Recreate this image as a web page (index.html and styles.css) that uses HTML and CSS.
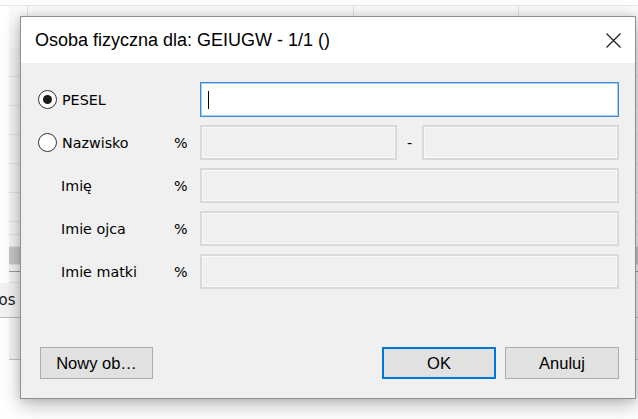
FILE: index.html
```html
<!DOCTYPE html>
<html lang="pl">
<head>
<meta charset="utf-8">
<title>Osoba fizyczna</title>
<link rel="stylesheet" href="styles.css">
</head>
<body>
  <!-- spreadsheet-like application window in the background -->
  <div class="sheet">
    <div class="sheet-head">
      <div class="head-cell head-a"></div>
      <div class="head-cell head-b"></div>
      <div class="head-cell head-c"></div>
      <div class="head-cell head-d"></div>
    </div>
    <div class="sheet-row r29"></div>
    <div class="sheet-row r29"></div>
    <div class="sheet-row r29"></div>
    <div class="sheet-row r29"></div>
    <div class="sheet-row r29"></div>
    <div class="sheet-row r29"></div>
    <div class="sheet-row r13"></div>
    <div class="sheet-row r12"></div>
    <div class="sheet-row r18 sel"></div>
    <div class="sheet-row r7"></div>
    <div class="sheet-row r11"></div>
    <div class="sheet-row r35"><span class="cell-text">Pos</span></div>
    <div class="sheet-row r42"></div>
  </div>

  <!-- modal dialog -->
  <div class="dialog">
    <div class="titlebar">
      <span class="title">Osoba fizyczna dla: GEIUGW - 1/1 ()</span>
      <span class="close">
        <svg width="15" height="15" viewBox="0 0 15 15"><path d="M0.5 0.5 L14.5 14.5 M14.5 0.5 L0.5 14.5" stroke="#1b1b1b" stroke-width="1.2" fill="none"/></svg>
      </span>
    </div>
    <div class="content">
      <div class="form">
        <label class="opt"><span class="radio checked"></span>PESEL</label>
        <span class="pct"></span>
        <div class="field active"><span class="caret"></span></div>

        <label class="opt"><span class="radio"></span>Nazwisko</label>
        <span class="pct">%</span>
        <div class="pair">
          <div class="field"></div>
          <span class="dash">-</span>
          <div class="field"></div>
        </div>

        <span class="lbl">Imię</span>
        <span class="pct">%</span>
        <div class="field"></div>

        <span class="lbl">Imie ojca</span>
        <span class="pct">%</span>
        <div class="field"></div>

        <span class="lbl">Imie matki</span>
        <span class="pct">%</span>
        <div class="field"></div>
      </div>
      <div class="actions">
        <button class="btn btn-new">Nowy ob…</button>
        <span class="spacer"></span>
        <button class="btn btn-default">OK</button>
        <button class="btn">Anuluj</button>
      </div>
    </div>
  </div>
</body>
</html>
```
FILE: styles.css
```css
html, body {
  margin: 0;
  padding: 0;
}

body {
  width: 638px;
  height: 419px;
  overflow: hidden;
  background: #ffffff;
  position: relative;
  font-family: "DejaVu Sans", sans-serif;
}

/* background sheet */
.sheet {
  margin: 5px 0 0 0;
  display: flex;
  flex-direction: column;
}

.sheet-head {
  height: 43px;
  display: flex;
  border-top: 1px solid #e6e6e6;
  box-sizing: border-box;
  background: #fafafa;
}

.head-cell {
  border-right: 1px solid #e0e0e0;
  box-sizing: border-box;
}

.head-a { width: 9px; background: #ffffff; border-right: none; }
.head-b { width: 19px; }
.head-c { width: 326px; }
.head-d { width: 165px; }

.sheet-row {
  margin-left: 9px;
  border-bottom: 1px solid #e2e2e2;
  box-sizing: border-box;
  background: #f5f5f5;
}

.r29 { height: 29px; }
.r13 { height: 13px; }
.r12 { height: 12px; }
.r18 { height: 18px; }
.r7 { height: 7px; border-bottom-color: #9a9a9a; }
.r11 { height: 11px; }
.r35 { height: 35px; margin-left: 0; border-bottom-color: #bdbdbd; background: #f3f3f3; }
.r42 { height: 42px; border-bottom-color: #c6c6c6; }

.sel { background: #c8c8c8; }

.cell-text {
  display: block;
  margin: 8px 0 0 -10px;
  font-family: "DejaVu Sans", sans-serif;
  font-size: 15px;
  color: #222;
}

/* dialog window */
.dialog {
  position: absolute;
  left: 20px;
  top: 16px;
  width: 616px;
  height: 383px;
  box-sizing: border-box;
  border: 1px solid #8f8f8f;
  background: #f0f0f0;
  box-shadow: 0 6px 18px rgba(0, 0, 0, 0.28), 0 0 8px rgba(0, 0, 0, 0.10);
  display: flex;
  flex-direction: column;
}

.titlebar {
  height: 46px;
  background: #ffffff;
  display: flex;
  align-items: center;
  padding-left: 14px;
}

.title {
  flex: 1;
  font-family: "Liberation Sans", Arial, sans-serif;
  font-size: 18px;
  color: #000;
  padding-top: 1px;
}

.close {
  width: 44px;
  height: 46px;
  display: flex;
  align-items: center;
  justify-content: center;
}

.content {
  flex: 1;
  display: flex;
  flex-direction: column;
  justify-content: space-between;
  padding: 19px 16px 19px 17px;
}

.form {
  display: grid;
  grid-template-columns: 136px 26px 1fr;
  grid-auto-rows: 35px;
  row-gap: 8px;
  align-items: center;
  font-size: 14.3px;
  color: #000;
}

.opt {
  display: flex;
  align-items: center;
  gap: 5px;
}

.radio {
  width: 19px;
  height: 19px;
  box-sizing: border-box;
  border: 1.3px solid #333;
  border-radius: 50%;
  background: #fff;
  display: flex;
  align-items: center;
  justify-content: center;
}

.radio.checked::after {
  content: "";
  width: 9px;
  height: 9px;
  border-radius: 50%;
  background: #1a1a1a;
}

.lbl {
  padding-left: 23px;
}

.field {
  height: 35px;
  box-sizing: border-box;
  border: 2px solid #d9d9d9;
  box-shadow: inset 0 0 0 1px #f9f9f9;
  background: #f0f0f0;
}

.field.active {
  background: #ffffff;
  border: 1px solid #3b8bd9;
  box-shadow: inset 0 0 0 1px #a9cdef;
  display: flex;
  align-items: center;
  padding-left: 7px;
}

.caret {
  width: 1px;
  height: 18px;
  background: #000;
}

.pair {
  display: flex;
  align-items: center;
}

.pair .field {
  flex: 1;
}

.dash {
  width: 25px;
  text-align: center;
}

.actions {
  display: flex;
  align-items: center;
  gap: 9px;
  padding-left: 2px;
}

.spacer {
  flex: 1;
}

.btn {
  width: 114px;
  height: 32px;
  box-sizing: border-box;
  border: 1px solid #adadad;
  background: #e1e1e1;
  font-family: "Liberation Sans", Arial, sans-serif;
  font-size: 16.5px;
  color: #000;
  padding: 0;
}

.btn-new {
  width: 113px;
}

.btn-default {
  border: 2px solid #0078d7;
}
```
